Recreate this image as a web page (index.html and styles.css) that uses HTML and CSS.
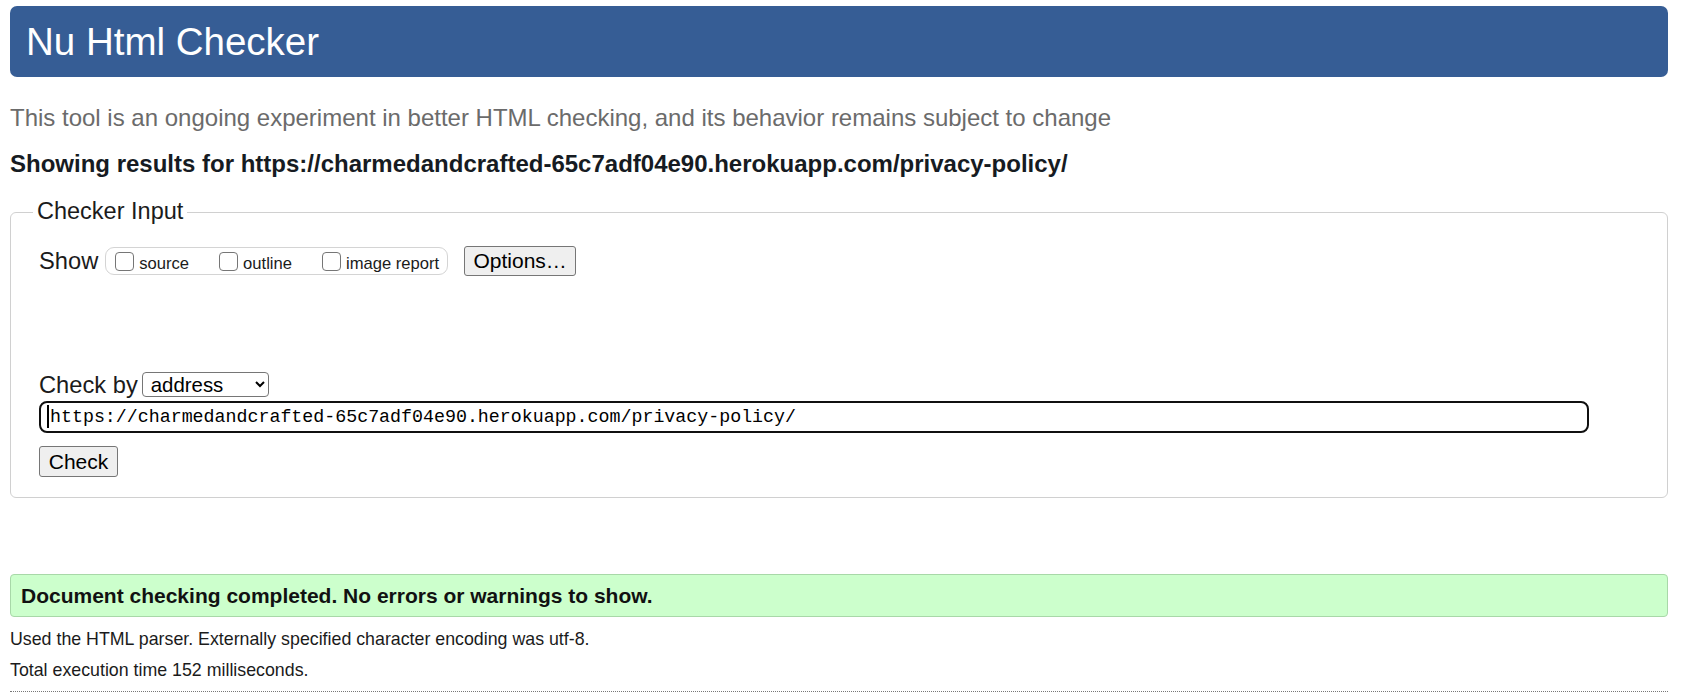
FILE: index.html
```html
<!DOCTYPE html>
<html lang="en">
<head>
<meta charset="utf-8">
<title>Nu Html Checker</title>
<link rel="stylesheet" href="styles.css">
</head>
<body>
<div class="page">
  <h1 class="banner">Nu Html Checker</h1>
  <p class="intro">This tool is an ongoing experiment in better HTML checking, and its behavior remains subject to change</p>
  <p class="showing">Showing results for https://charmedandcrafted-65c7adf04e90.herokuapp.com/privacy-policy/</p>
  <fieldset class="checker">
    <legend>Checker Input</legend>
    <div class="inner">
      <div class="show-row">
        <span class="lbl">Show</span>
        <span class="group">
          <label class="opt"><input type="checkbox" class="cb"><span>source</span></label>
          <label class="opt"><input type="checkbox" class="cb"><span>outline</span></label>
          <label class="opt"><input type="checkbox" class="cb"><span>image report</span></label>
        </span>
        <button class="btn options" type="button">Options…</button>
      </div>
      <div class="by-row">
        <span class="lbl">Check by</span>
        <select class="sel"><option>address</option><option>file upload</option><option>text input</option></select>
      </div>
      <div class="url-wrap">
        <input class="url" type="text" value="https://charmedandcrafted-65c7adf04e90.herokuapp.com/privacy-policy/">
        <span class="caret"></span>
      </div>
      <button class="btn check" type="button">Check</button>
    </div>
  </fieldset>
  <p class="success">Document checking completed. No errors or warnings to show.</p>
  <p class="note first">Used the HTML parser. Externally specified character encoding was utf-8.</p>
  <p class="note">Total execution time 152 milliseconds.</p>
  <hr class="dots">
</div>
</body>
</html>
```
FILE: styles.css
```css
html, body {
  margin: 0;
  padding: 0;
  background: #ffffff;
}
body {
  font-family: "Liberation Sans", Arial, sans-serif;
  color: #1b1b1b;
}
.page {
  padding: 6px 17px 0 10px;
}
.banner {
  margin: 0;
  height: 71px;
  background: #365d95;
  color: #ffffff;
  border-radius: 7px;
  font-weight: normal;
  font-size: 38.5px;
  line-height: 72px;
  padding-left: 16px;
}
.intro {
  margin: 27px 0 0 0;
  font-size: 24px;
  line-height: 28px;
  color: #6b6b6b;
}
.showing {
  margin: 18px 0 0 0;
  font-size: 24px;
  line-height: 28px;
  font-weight: bold;
  color: #161b22;
}
.checker {
  margin: 19px 0 0 0;
  padding: 0 0 20px 22px;
  border: 1px solid #d0d0d0;
  border-radius: 6px;
  min-width: 0;
}
.checker legend {
  font-size: 23.5px;
  line-height: 28px;
  padding: 0 4px 2px 4px;
}
.inner {
  padding-left: 6px;
}
.show-row {
  display: flex;
  align-items: center;
  height: 30px;
  margin-top: 19px;
}
.lbl {
  font-size: 23.7px;
  line-height: 28px;
}
.show-row .lbl {
  margin-right: 7px;
}
.group {
  display: flex;
  align-items: center;
  height: 26px;
  border: 1px solid #d4d4d4;
  border-radius: 9px;
  padding: 0 8px 0 9px;
  gap: 30px;
}
.opt {
  display: flex;
  align-items: flex-end;
  font-size: 16.6px;
  line-height: 19px;
}
.opt span {
  position: relative;
  top: 2px;
}
.cb {
  appearance: none;
  -webkit-appearance: none;
  width: 19px;
  height: 19px;
  margin: 0 5px 0 0;
  border: 1px solid #767676;
  border-radius: 4px;
  background: #ffffff;
  box-sizing: border-box;
}
.btn {
  font-family: "Liberation Sans", Arial, sans-serif;
  font-size: 21px;
  color: #000000;
  background: #efefef;
  border: 1px solid #767676;
  border-radius: 3px;
  padding: 0;
  box-sizing: border-box;
}
.options {
  width: 112px;
  height: 30px;
  margin-left: 16px;
}
.by-row {
  display: flex;
  align-items: center;
  height: 25px;
  margin-top: 96px;
}
.by-row .lbl {
  margin-right: 4px;
}
.sel {
  width: 127px;
  height: 25px;
  font-family: "Liberation Sans", Arial, sans-serif;
  font-size: 20.4px;
  color: #000000;
  border: 1px solid #767676;
  border-radius: 4px;
  background: #ffffff;
  padding: 0 0 0 4px;
  box-sizing: border-box;
}
.url-wrap {
  position: relative;
  margin-top: 4px;
  width: 1550px;
}
.url {
  display: block;
  width: 1550px;
  height: 32px;
  box-sizing: border-box;
  border: 2px solid #101010;
  border-radius: 8px;
  padding: 0 0 0 9px;
  font-family: "Liberation Mono", "DejaVu Sans Mono", monospace;
  font-size: 18.3px;
  color: #000000;
  outline: none;
}
.caret {
  position: absolute;
  left: 8px;
  top: 4px;
  width: 2px;
  height: 23px;
  background: #000000;
}
.check {
  display: block;
  width: 79px;
  height: 31px;
  margin-top: 13px;
  font-size: 21px;
}
.success {
  margin: 76px 0 0 0;
  height: 41px;
  line-height: 41px;
  background: #ccffcc;
  border: 1px solid #a8d8a8;
  border-radius: 4px;
  padding-left: 10px;
  font-size: 21px;
  font-weight: bold;
  color: #111111;
}
.note {
  margin: 0;
  font-size: 17.8px;
  line-height: 31px;
  color: #1b1b1b;
}
.note.first {
  margin-top: 7px;
}
.dots {
  margin: 5px 0 0 0;
  border: 0;
  border-top: 1px dotted #777777;
  height: 0;
}
```
